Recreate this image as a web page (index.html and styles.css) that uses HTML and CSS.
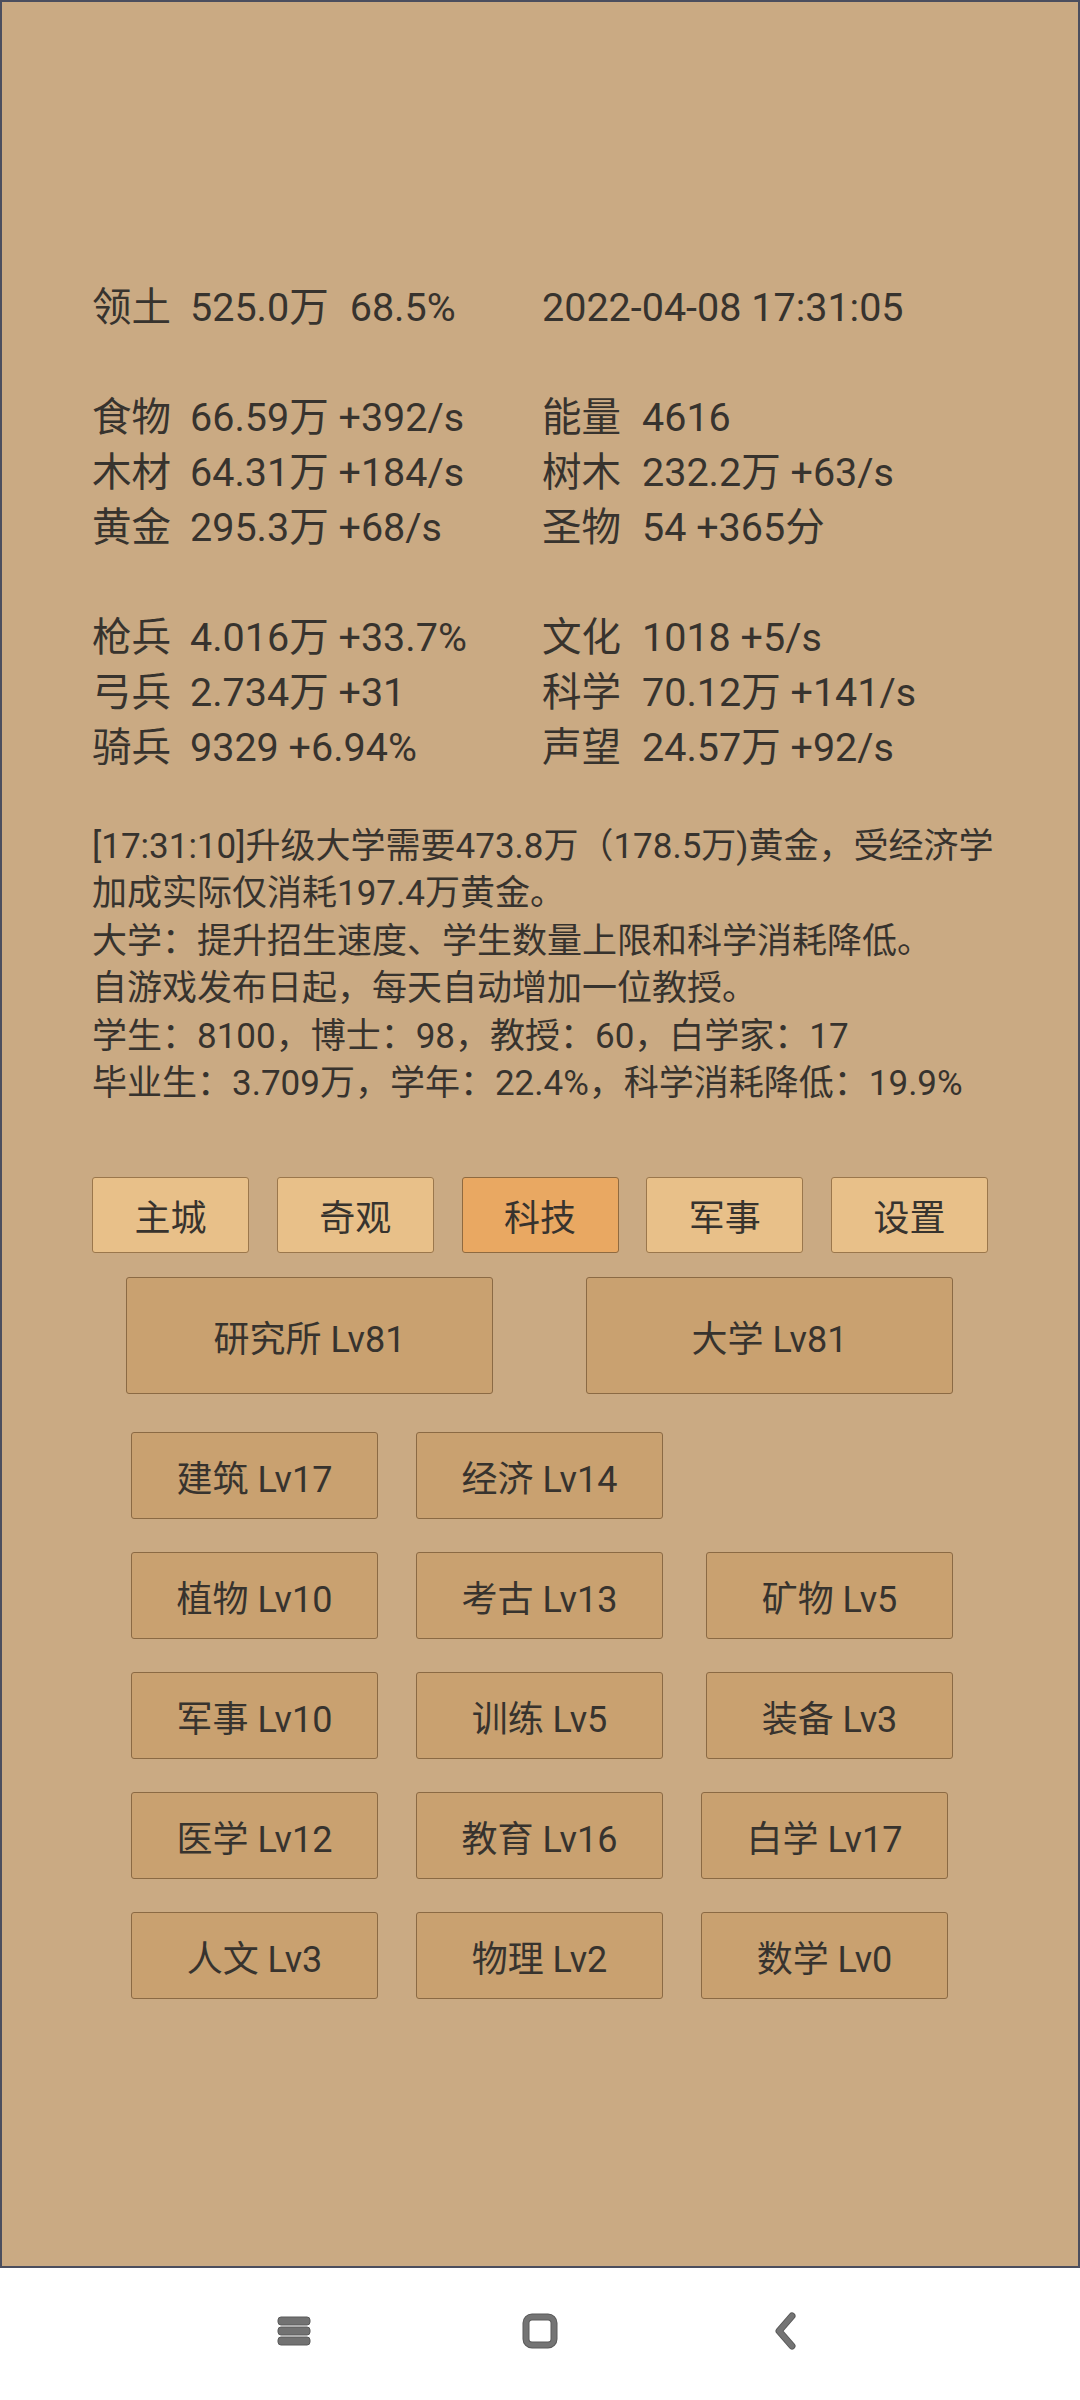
FILE: index.html
```html
<!DOCTYPE html>
<html lang="zh-CN">
<head>
<meta charset="utf-8">
<title>科技</title>
<link rel="stylesheet" href="styles.css">
</head>
<body>
<div class="screen">
  <div class="stats">
    <div class="lbl">领土</div><div class="val">525.0万<span class="sep">68.5%</span></div><div class="time">2022-04-08 17:31:05</div>
    <div class="blank"></div>
    <div class="lbl">食物</div><div class="val">66.59万 +392/s</div><div class="lbl">能量</div><div class="val">4616</div>
    <div class="lbl">木材</div><div class="val">64.31万 +184/s</div><div class="lbl">树木</div><div class="val">232.2万 +63/s</div>
    <div class="lbl">黄金</div><div class="val">295.3万 +68/s</div><div class="lbl">圣物</div><div class="val">54 +365分</div>
    <div class="blank"></div>
    <div class="lbl">枪兵</div><div class="val">4.016万 +33.7%</div><div class="lbl">文化</div><div class="val">1018 +5/s</div>
    <div class="lbl">弓兵</div><div class="val">2.734万 +31</div><div class="lbl">科学</div><div class="val">70.12万 +141/s</div>
    <div class="lbl">骑兵</div><div class="val">9329 +6.94%</div><div class="lbl">声望</div><div class="val">24.57万 +92/s</div>
  </div>

  <div class="log">
    <div>[17:31:10]升级大学需要473.8万（178.5万)黄金，受经济学</div>
    <div>加成实际仅消耗197.4万黄金。</div>
    <div>大学：提升招生速度、学生数量上限和科学消耗降低。</div>
    <div>自游戏发布日起，每天自动增加一位教授。</div>
    <div>学生：8100，博士：98，教授：60，白学家：17</div>
    <div>毕业生：3.709万，学年：22.4%，科学消耗降低：19.9%</div>
  </div>

  <div class="tabs">
    <div class="tab">主城</div>
    <div class="tab">奇观</div>
    <div class="tab active">科技</div>
    <div class="tab">军事</div>
    <div class="tab">设置</div>
  </div>

  <div class="big-row">
    <div class="btn big">研究所 Lv81</div>
    <div class="btn big">大学 Lv81</div>
  </div>

  <div class="techs">
    <div class="btn tech">建筑 Lv17</div>
    <div class="btn tech">经济 Lv14</div>
    <div class="empty"></div>
    <div class="btn tech">植物 Lv10</div>
    <div class="btn tech">考古 Lv13</div>
    <div class="btn tech">矿物 Lv5</div>
    <div class="btn tech">军事 Lv10</div>
    <div class="btn tech">训练 Lv5</div>
    <div class="btn tech">装备 Lv3</div>
    <div class="btn tech">医学 Lv12</div>
    <div class="btn tech">教育 Lv16</div>
    <div class="btn tech shift">白学 Lv17</div>
    <div class="btn tech">人文 Lv3</div>
    <div class="btn tech">物理 Lv2</div>
    <div class="btn tech shift">数学 Lv0</div>
  </div>
</div>

<div class="navbar">
  <div class="navbtn">
    <svg width="34" height="30" viewBox="0 0 34 30">
      <rect x="1" y="1" width="32" height="8" rx="3" fill="#727272" stroke="#5a5a5a" stroke-width="1"/>
      <rect x="1" y="11" width="32" height="8" rx="3" fill="#727272" stroke="#5a5a5a" stroke-width="1"/>
      <rect x="1" y="21" width="32" height="8" rx="3" fill="#727272" stroke="#5a5a5a" stroke-width="1"/>
    </svg>
  </div>
  <div class="navbtn">
    <svg width="36" height="36" viewBox="0 0 36 36">
      <rect x="4" y="4" width="28" height="28" rx="6" fill="none" stroke="#5a5a5a" stroke-width="7"/>
      <rect x="4" y="4" width="28" height="28" rx="6" fill="none" stroke="#747474" stroke-width="5"/>
    </svg>
  </div>
  <div class="navbtn">
    <svg width="26" height="38" viewBox="0 0 26 38">
      <polyline points="19,4 6,19 19,34" fill="none" stroke="#5a5a5a" stroke-width="7" stroke-linecap="round" stroke-linejoin="round"/>
      <polyline points="19,4 6,19 19,34" fill="none" stroke="#747474" stroke-width="5" stroke-linecap="round" stroke-linejoin="round"/>
    </svg>
  </div>
</div>
</body>
</html>
```

FILE: styles.css
```css
html, body {
  margin: 0;
  padding: 0;
  width: 1080px;
  height: 2400px;
  background: #ffffff;
  overflow: hidden;
}

body {
  font-family: Roboto, "Noto Sans CJK SC", sans-serif;
  color: #37332e;
}

.screen {
  box-sizing: border-box;
  width: 1080px;
  height: 2268px;
  border: 2px solid #4b4e5e;
  background: #caaa83;
  padding: 278px 0 0 90px;
}

.stats {
  display: grid;
  grid-template-columns: 98px 352px 100px auto;
  font-size: 39.5px;
  line-height: 55px;
  white-space: nowrap;
}

.blank {
  grid-column: 1 / -1;
  height: 55px;
}

.time {
  grid-column: 3 / span 2;
}

.sep {
  margin-left: 21px;
}

.log {
  margin-top: 48px;
  font-size: 35px;
  line-height: 47.4px;
  white-space: nowrap;
}

.tabs {
  margin-top: 70px;
  width: 896px;
  display: flex;
  justify-content: space-between;
}

.tab {
  box-sizing: border-box;
  width: 157px;
  height: 76px;
  background: #e8c089;
  border: 1.5px solid #9b774c;
  border-radius: 3px;
  display: flex;
  align-items: center;
  justify-content: center;
  font-size: 36px;
}

.tab.active {
  background: #e9a862;
  border-color: #8f6a40;
}

.btn {
  box-sizing: border-box;
  background: #c9a170;
  border: 1.5px solid #8b6a44;
  border-radius: 3px;
  display: flex;
  align-items: center;
  justify-content: center;
  font-size: 36px;
  white-space: nowrap;
}

.big-row {
  margin: 24px 0 0 34px;
  display: flex;
  gap: 93px;
}

.big {
  width: 367px;
  height: 117px;
}

.techs {
  margin: 38px 0 0 39px;
  display: grid;
  grid-template-columns: 285px 290px 247px;
  row-gap: 33px;
}

.tech {
  width: 247px;
  height: 87px;
}

.shift {
  margin-left: -5px;
}

.empty {
  height: 87px;
}

.navbar {
  height: 132px;
  display: flex;
  justify-content: center;
  align-items: center;
  gap: 186px;
  padding-bottom: 6px;
  box-sizing: border-box;
  background: #ffffff;
}

.navbtn {
  width: 60px;
  height: 60px;
  display: flex;
  align-items: center;
  justify-content: center;
}
```
